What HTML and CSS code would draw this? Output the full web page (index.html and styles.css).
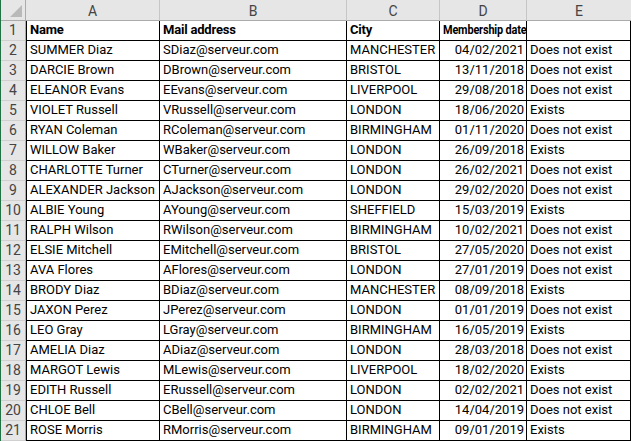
FILE: index.html
```html
<!DOCTYPE html>
<html>
<head>
<meta charset="utf-8">
<link rel="stylesheet" href="styles.css">
</head>
<body>
<div class="sheet">
  <div class="ch corner"><span class="tri"></span></div>
  <div class="ch">A</div><div class="ch">B</div><div class="ch">C</div><div class="ch">D</div><div class="ch last">E</div>

  <div class="rh">1</div><div class="c a b">Name</div><div class="c b">Mail address</div><div class="c b">City</div><div class="c b"><span class="narrow">Membership date</span></div><div class="c"></div>
  <div class="rh">2</div><div class="c a">SUMMER Diaz</div><div class="c">SDiaz@serveur.com</div><div class="c">MANCHESTER</div><div class="c r">04/02/2021</div><div class="c">Does not exist</div>
  <div class="rh">3</div><div class="c a">DARCIE Brown</div><div class="c">DBrown@serveur.com</div><div class="c">BRISTOL</div><div class="c r">13/11/2018</div><div class="c">Does not exist</div>
  <div class="rh">4</div><div class="c a">ELEANOR Evans</div><div class="c">EEvans@serveur.com</div><div class="c">LIVERPOOL</div><div class="c r">29/08/2018</div><div class="c">Does not exist</div>
  <div class="rh">5</div><div class="c a">VIOLET Russell</div><div class="c">VRussell@serveur.com</div><div class="c">LONDON</div><div class="c r">18/06/2020</div><div class="c">Exists</div>
  <div class="rh">6</div><div class="c a">RYAN Coleman</div><div class="c">RColeman@serveur.com</div><div class="c">BIRMINGHAM</div><div class="c r">01/11/2020</div><div class="c">Does not exist</div>
  <div class="rh">7</div><div class="c a">WILLOW Baker</div><div class="c">WBaker@serveur.com</div><div class="c">LONDON</div><div class="c r">26/09/2018</div><div class="c">Exists</div>
  <div class="rh">8</div><div class="c a">CHARLOTTE Turner</div><div class="c">CTurner@serveur.com</div><div class="c">LONDON</div><div class="c r">26/02/2021</div><div class="c">Does not exist</div>
  <div class="rh">9</div><div class="c a">ALEXANDER Jackson</div><div class="c">AJackson@serveur.com</div><div class="c">LONDON</div><div class="c r">29/02/2020</div><div class="c">Does not exist</div>
  <div class="rh">10</div><div class="c a">ALBIE Young</div><div class="c">AYoung@serveur.com</div><div class="c">SHEFFIELD</div><div class="c r">15/03/2019</div><div class="c">Exists</div>
  <div class="rh">11</div><div class="c a">RALPH Wilson</div><div class="c">RWilson@serveur.com</div><div class="c">BIRMINGHAM</div><div class="c r">10/02/2021</div><div class="c">Does not exist</div>
  <div class="rh">12</div><div class="c a">ELSIE Mitchell</div><div class="c">EMitchell@serveur.com</div><div class="c">BRISTOL</div><div class="c r">27/05/2020</div><div class="c">Does not exist</div>
  <div class="rh">13</div><div class="c a">AVA Flores</div><div class="c">AFlores@serveur.com</div><div class="c">LONDON</div><div class="c r">27/01/2019</div><div class="c">Does not exist</div>
  <div class="rh">14</div><div class="c a">BRODY Diaz</div><div class="c">BDiaz@serveur.com</div><div class="c">MANCHESTER</div><div class="c r">08/09/2018</div><div class="c">Exists</div>
  <div class="rh">15</div><div class="c a">JAXON Perez</div><div class="c">JPerez@serveur.com</div><div class="c">LONDON</div><div class="c r">01/01/2019</div><div class="c">Does not exist</div>
  <div class="rh">16</div><div class="c a">LEO Gray</div><div class="c">LGray@serveur.com</div><div class="c">BIRMINGHAM</div><div class="c r">16/05/2019</div><div class="c">Exists</div>
  <div class="rh">17</div><div class="c a">AMELIA Diaz</div><div class="c">ADiaz@serveur.com</div><div class="c">LONDON</div><div class="c r">28/03/2018</div><div class="c">Does not exist</div>
  <div class="rh">18</div><div class="c a">MARGOT Lewis</div><div class="c">MLewis@serveur.com</div><div class="c">LIVERPOOL</div><div class="c r">18/02/2020</div><div class="c">Exists</div>
  <div class="rh">19</div><div class="c a">EDITH Russell</div><div class="c">ERussell@serveur.com</div><div class="c">LONDON</div><div class="c r">02/02/2021</div><div class="c">Does not exist</div>
  <div class="rh">20</div><div class="c a">CHLOE Bell</div><div class="c">CBell@serveur.com</div><div class="c">LONDON</div><div class="c r">14/04/2019</div><div class="c">Does not exist</div>
  <div class="rh">21</div><div class="c a">ROSE Morris</div><div class="c">RMorris@serveur.com</div><div class="c">BIRMINGHAM</div><div class="c r">09/01/2019</div><div class="c">Exists</div>
</div>
</body>
</html>
```

FILE: styles.css
```css
* { box-sizing: border-box; }
html, body { margin: 0; padding: 0; background: #fff; }
body {
  width: 631px;
  height: 441px;
  overflow: hidden;
  border-left: 1px solid #217346;
  font-family: Roboto, "Liberation Sans", Arial, sans-serif;
  font-size: 13px;
  color: #000;
}
.sheet {
  display: grid;
  grid-template-columns: 25px 134px 187px 93px 87px 104px;
  grid-template-rows: 21px repeat(21, 20px);
}
.ch {
  background: #e6e6e6;
  border-right: 1px solid #c6c6c6;
  border-bottom: 1px solid #ababab;
  color: #444;
  font-size: 14px;
  display: flex;
  align-items: center;
  justify-content: center;
  padding-top: 1px;
}
.ch.last { border-right: none; }
.corner {
  position: relative;
  border-right: 1px solid #ababab;
}
.tri {
  position: absolute;
  right: 3px;
  bottom: 3px;
  width: 0;
  height: 0;
  border-left: 12px solid transparent;
  border-bottom: 12px solid #b9b9b9;
}
.rh {
  background: #e6e6e6;
  border-right: 1px solid #ababab;
  border-bottom: 1px solid #d0d0d0;
  color: #444;
  font-size: 14px;
  display: flex;
  align-items: flex-end;
  justify-content: center;
  padding-bottom: 1px;
  line-height: 17px;
}
.c {
  border-right: 1px solid #000;
  border-bottom: 1px solid #000;
  display: flex;
  align-items: flex-end;
  padding: 0 2px 2px 3px;
  line-height: 16px;
  white-space: nowrap;
  overflow: hidden;
}
.c.a { border-left: 1px solid #000; }
.c.r { justify-content: flex-end; }
.c.b { font-weight: bold; overflow: visible; letter-spacing: -0.2px; }
.narrow {
  display: inline-block;
  transform: scaleX(0.84);
  transform-origin: left bottom;
}
```
